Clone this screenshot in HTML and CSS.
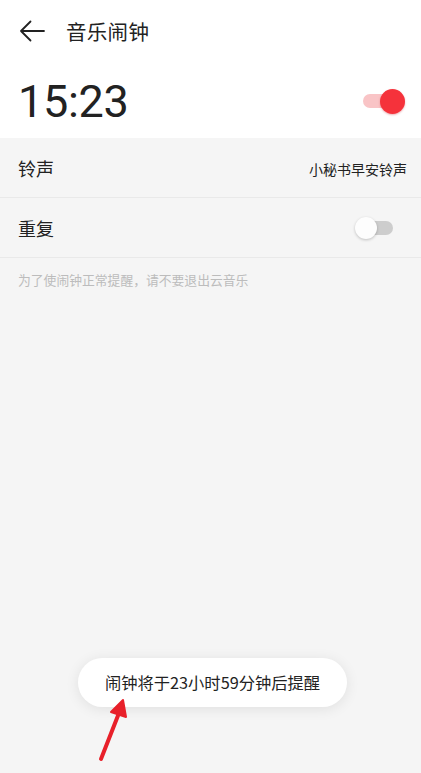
FILE: index.html
```html
<!DOCTYPE html>
<html lang="zh-CN">
<head>
<meta charset="utf-8">
<title>音乐闹钟</title>
<link rel="stylesheet" href="styles.css">
</head>
<body>
<div class="screen">
  <header class="top">
    <div class="nav">
      <svg class="back" width="26" height="22" viewBox="0 0 26 22" aria-hidden="true">
        <path d="M25 11 H2 M11.5 1.5 L2 11 L11.5 20.5" fill="none" stroke="#222" stroke-width="1.8" stroke-linecap="round" stroke-linejoin="round"/>
      </svg>
      <h1 class="title">音乐闹钟</h1>
    </div>
    <div class="alarm">
      <span class="time">15:23</span>
      <span class="switch on"><span class="knob"></span></span>
    </div>
  </header>

  <section class="list">
    <div class="row">
      <span class="label">铃声</span>
      <span class="value">小秘书早安铃声</span>
    </div>
    <div class="row">
      <span class="label">重复</span>
      <span class="switch off"><span class="knob"></span></span>
    </div>
  </section>

  <p class="hint">为了使闹钟正常提醒，请不要退出云音乐</p>

  <div class="toast">闹钟将于23小时59分钟后提醒</div>

  <svg class="pointer" width="40" height="70" viewBox="0 0 40 70" aria-hidden="true">
    <path d="M9 67 L27 21" stroke="#e8202a" stroke-width="4" stroke-linecap="round"/>
    <path d="M31 8 L34 25 L19 20 Z" fill="#e8202a" stroke="#e8202a" stroke-width="2" stroke-linejoin="round"/>
  </svg>
</div>
</body>
</html>
```

FILE: styles.css
```css
* {
  box-sizing: border-box;
}

html, body {
  margin: 0;
  padding: 0;
}

body {
  background: #f5f5f5;
  font-family: "Noto Sans CJK SC", "Noto Sans", Roboto, sans-serif;
  color: #222;
}

.screen {
  position: relative;
  width: 421px;
  height: 773px;
  overflow: hidden;
  background: #f5f5f5;
}

.top {
  background: #fff;
  height: 138px;
}

.nav {
  height: 62px;
  display: flex;
  align-items: center;
  padding-left: 19px;
  gap: 21px;
}

.back {
  display: block;
  margin-top: -1px;
}

.title {
  margin: 0;
  font-size: 20.5px;
  font-weight: 400;
  color: #222;
  letter-spacing: 0.3px;
}

.alarm {
  height: 76px;
  display: flex;
  align-items: center;
  justify-content: space-between;
  padding: 0 18px 0 18px;
}

.time {
  font-family: Roboto, "Noto Sans", sans-serif;
  font-size: 45px;
  font-weight: 400;
  color: #222;
  letter-spacing: -0.3px;
  margin-top: 2px;
}

.switch {
  position: relative;
  display: block;
  width: 39px;
  height: 14px;
  border-radius: 7px;
}

.switch .knob {
  position: absolute;
  top: 50%;
  border-radius: 50%;
}

.switch.on {
  background: #f9c4c6;
  margin-right: 1px;
  margin-top: 2px;
}

.switch.on .knob {
  right: -3px;
  width: 25px;
  height: 25px;
  margin-top: -12.5px;
  background: #f5323b;
  box-shadow: 0 1px 2px rgba(200, 30, 40, 0.35);
}

.switch.off {
  background: #cdcdcd;
  width: 36px;
  margin-right: 14px;
}

.switch.off .knob {
  left: -2px;
  width: 22px;
  height: 22px;
  margin-top: -11px;
  background: #fdfdfd;
  box-shadow: 0 1px 3px rgba(0, 0, 0, 0.22);
}

.list {
  display: flex;
  flex-direction: column;
}

.row {
  height: 60px;
  display: flex;
  align-items: center;
  justify-content: space-between;
  padding: 0 14px 0 18px;
  border-bottom: 1px solid #e9e9e9;
}

.label {
  font-size: 18px;
  color: #222;
  margin-top: 1px;
}

.value {
  font-size: 14px;
  color: #222;
  margin-top: 2px;
}

.hint {
  margin: 13px 0 0 18px;
  font-size: 12.8px;
  color: #bcbcbc;
  line-height: 18px;
}

.toast {
  position: absolute;
  left: 78px;
  top: 658px;
  width: 269px;
  height: 49px;
  border-radius: 25px;
  background: #fff;
  box-shadow: 0 2px 14px rgba(0, 0, 0, 0.09);
  display: flex;
  align-items: center;
  justify-content: center;
  font-size: 16.3px;
  color: #222;
  padding-bottom: 2px;
}

.pointer {
  position: absolute;
  left: 92px;
  top: 692px;
}
```
